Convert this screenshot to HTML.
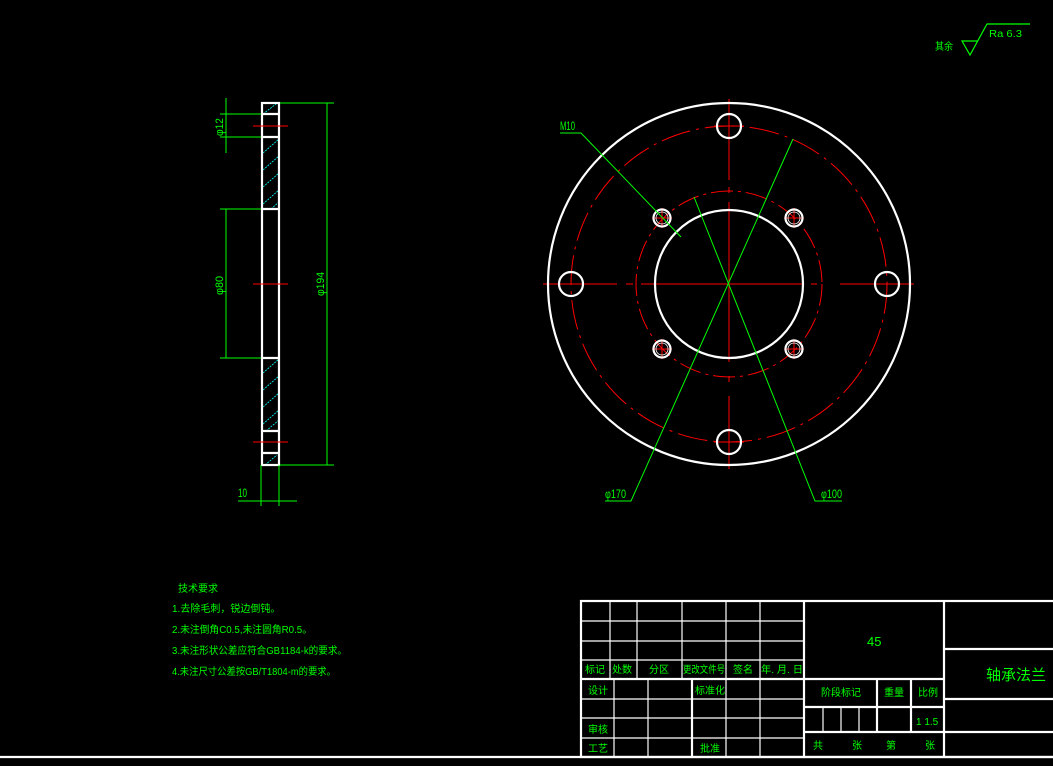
<!DOCTYPE html>
<html><head><meta charset="utf-8"><style>
html,body{margin:0;padding:0;background:#000;width:1053px;height:766px;overflow:hidden}
svg{display:block}
text{font-family:"Liberation Sans","Noto Sans CJK SC",sans-serif;fill:#00ff00}
</style></head><body>
<svg width="1053" height="766" viewBox="0 0 1053 766" xmlns="http://www.w3.org/2000/svg">
<!-- surface finish -->
<text x="935" y="50" font-size="10" textLength="18" lengthAdjust="spacingAndGlyphs">其余</text>
<polyline points="978,41 962,41 970,55 987,24 1030,24" fill="none" stroke="#00ff00" stroke-width="1.2"/>
<text x="989" y="37" font-size="10" textLength="33" lengthAdjust="spacingAndGlyphs">Ra 6.3</text>

<!-- side view -->
<g fill="none">
<g stroke="#00ffff" stroke-width="0.8" stroke-dasharray="2,1">
<line x1="263" y1="114" x2="276" y2="104"/>
<line x1="263" y1="153" x2="279" y2="139"/><line x1="263" y1="170" x2="279" y2="156"/><line x1="263" y1="187" x2="279" y2="173"/><line x1="263" y1="204" x2="279" y2="190"/><line x1="271" y1="209" x2="279" y2="202"/>
<line x1="263" y1="373" x2="279" y2="359"/><line x1="263" y1="390" x2="279" y2="376"/><line x1="263" y1="407" x2="279" y2="393"/><line x1="263" y1="424" x2="279" y2="410"/><line x1="266" y1="431" x2="279" y2="420"/>
<line x1="265" y1="465" x2="277" y2="455"/>
</g>
<g stroke="#fff" stroke-width="2.2">
<rect x="262" y="103" width="17" height="362"/>
<line x1="262" y1="114" x2="279" y2="114"/><line x1="262" y1="137" x2="279" y2="137"/>
<line x1="262" y1="209" x2="279" y2="209"/><line x1="262" y1="358" x2="279" y2="358"/>
<line x1="262" y1="431" x2="279" y2="431"/><line x1="262" y1="453" x2="279" y2="453"/>
</g>
<g stroke="#ff0000" stroke-width="1">
<line x1="253" y1="126" x2="288" y2="126"/><line x1="253" y1="284" x2="288" y2="284"/><line x1="253" y1="442" x2="288" y2="442"/>
</g>
<g stroke="#00ff00" stroke-width="1">
<line x1="226" y1="98" x2="226" y2="153"/>
<line x1="220" y1="114" x2="261" y2="114"/><line x1="220" y1="137" x2="261" y2="137"/>
<line x1="226" y1="209" x2="226" y2="358"/>
<line x1="220" y1="209" x2="261" y2="209"/><line x1="220" y1="358" x2="261" y2="358"/>
<line x1="327" y1="103" x2="327" y2="465"/>
<line x1="280" y1="103" x2="334" y2="103"/><line x1="280" y1="465" x2="334" y2="465"/>
<line x1="261" y1="465" x2="261" y2="506"/><line x1="279" y1="465" x2="279" y2="506"/>
<line x1="238" y1="501" x2="297" y2="501"/>
</g>
</g>
<text transform="translate(223,136) rotate(-90)" font-size="11" textLength="18" lengthAdjust="spacingAndGlyphs">φ12</text>
<text transform="translate(223,295) rotate(-90)" font-size="11" textLength="19" lengthAdjust="spacingAndGlyphs">φ80</text>
<text transform="translate(324,296) rotate(-90)" font-size="11" textLength="24" lengthAdjust="spacingAndGlyphs">φ194</text>
<text x="238" y="497" font-size="12" textLength="9" lengthAdjust="spacingAndGlyphs">10</text>

<!-- front view -->
<g fill="none">
<g stroke="#ff0000" stroke-width="1">
<circle cx="729" cy="284" r="158" stroke-dasharray="30,6,3,6"/>
<circle cx="729" cy="284" r="93" stroke-dasharray="22,5,3,5"/>
<line x1="543" y1="284" x2="617" y2="284"/><line x1="626" y1="284" x2="633" y2="284"/><line x1="641" y1="284" x2="803" y2="284"/><line x1="811" y1="284" x2="817" y2="284"/><line x1="840" y1="284" x2="914" y2="284"/>
<line x1="729" y1="99" x2="729" y2="180"/><line x1="729" y1="187" x2="729" y2="193"/><line x1="729" y1="202" x2="729" y2="362"/><line x1="729" y1="376" x2="729" y2="382"/><line x1="729" y1="396" x2="729" y2="469"/>
<line x1="652" y1="218" x2="672" y2="218"/><line x1="662" y1="208" x2="662" y2="228"/>
<line x1="784" y1="218" x2="804" y2="218"/><line x1="794" y1="208" x2="794" y2="228"/>
<line x1="652" y1="349" x2="672" y2="349"/><line x1="662" y1="339" x2="662" y2="359"/>
<line x1="784" y1="349" x2="804" y2="349"/><line x1="794" y1="339" x2="794" y2="359"/>
<line x1="714" y1="126" x2="744" y2="126"/><line x1="714" y1="442" x2="744" y2="442"/>
<line x1="559" y1="284" x2="583" y2="284"/><line x1="875" y1="284" x2="899" y2="284"/>
</g>
<g stroke="#fff" stroke-width="2.2">
<circle cx="729" cy="284" r="181"/>
<circle cx="729" cy="284" r="74"/>
<circle cx="729" cy="126" r="12"/><circle cx="729" cy="442" r="12"/>
<circle cx="571" cy="284" r="12"/><circle cx="887" cy="284" r="12"/>
<circle cx="662" cy="218" r="8.5"/><circle cx="794" cy="218" r="8.5"/>
<circle cx="662" cy="349" r="8.5"/><circle cx="794" cy="349" r="8.5"/>
</g>
<g stroke="#fff" stroke-width="0.8">
<circle cx="662" cy="218" r="6"/><circle cx="794" cy="218" r="6"/>
<circle cx="662" cy="349" r="6"/><circle cx="794" cy="349" r="6"/>
</g>
<g stroke="#00ff00" stroke-width="1">
<polyline points="560,133 581,133 681,237"/>
<polyline points="605,501 631,501 793,139"/>
<polyline points="842,501 815,501 694,197"/>
</g>
</g>
<text x="560" y="130" font-size="12" textLength="15" lengthAdjust="spacingAndGlyphs">M10</text>
<text x="605" y="498" font-size="12" textLength="21" lengthAdjust="spacingAndGlyphs">φ170</text>
<text x="821" y="498" font-size="12" textLength="21" lengthAdjust="spacingAndGlyphs">φ100</text>

<!-- technical requirements -->
<g font-size="10">
<text x="178" y="592">技术要求</text>
<text x="172" y="612">1.去除毛刺，锐边倒钝。</text>
<text x="172" y="633" textLength="140" lengthAdjust="spacingAndGlyphs">2.未注倒角C0.5,未注圆角R0.5。</text>
<text x="172" y="654" textLength="175" lengthAdjust="spacingAndGlyphs">3.未注形状公差应符合GB1184-k的要求。</text>
<text x="172" y="675" textLength="164" lengthAdjust="spacingAndGlyphs">4.未注尺寸公差按GB/T1804-m的要求。</text>
</g>

<!-- bottom line -->
<line x1="0" y1="757" x2="1053" y2="757" stroke="#fff" stroke-width="2.2"/>

<!-- title block -->
<g fill="none" stroke="#fff" stroke-width="1.2">
<line x1="610" y1="601" x2="610" y2="679"/><line x1="637" y1="601" x2="637" y2="679"/>
<line x1="682" y1="601" x2="682" y2="679"/><line x1="726" y1="601" x2="726" y2="757"/>
<line x1="760" y1="601" x2="760" y2="757"/>
<line x1="581" y1="621" x2="804" y2="621"/><line x1="581" y1="641" x2="804" y2="641"/><line x1="581" y1="660" x2="804" y2="660"/>
<line x1="614" y1="679" x2="614" y2="757"/><line x1="648" y1="679" x2="648" y2="757"/>
<line x1="581" y1="699" x2="804" y2="699"/><line x1="581" y1="718" x2="804" y2="718"/><line x1="581" y1="738" x2="804" y2="738"/>
<line x1="823" y1="707" x2="823" y2="732"/><line x1="841" y1="707" x2="841" y2="732"/><line x1="859" y1="707" x2="859" y2="732"/>
</g>
<g fill="none" stroke="#fff" stroke-width="2.2">
<rect x="581" y="601" width="480" height="156"/>
<line x1="804" y1="601" x2="804" y2="757"/><line x1="944" y1="601" x2="944" y2="757"/>
<line x1="581" y1="679" x2="944" y2="679"/>
<line x1="692" y1="679" x2="692" y2="757"/>
<line x1="804" y1="707" x2="944" y2="707"/><line x1="804" y1="732" x2="944" y2="732"/>
<line x1="877" y1="679" x2="877" y2="732"/><line x1="911" y1="679" x2="911" y2="732"/>
<line x1="944" y1="649" x2="1053" y2="649"/><line x1="944" y1="699" x2="1053" y2="699"/><line x1="944" y1="732" x2="1053" y2="732"/>
</g>
<g font-size="10">
<text x="585" y="673">标记</text><text x="612" y="673">处数</text><text x="649" y="673">分区</text>
<text x="683" y="673" textLength="42" lengthAdjust="spacingAndGlyphs">更改文件号</text><text x="733" y="673">签名</text>
<text x="761" y="673" textLength="42" lengthAdjust="spacingAndGlyphs">年. 月. 日</text>
<text x="588" y="694">设计</text><text x="695" y="694">标准化</text>
<text x="588" y="733">审核</text><text x="588" y="752">工艺</text><text x="700" y="752">批准</text>
<text x="821" y="696">阶段标记</text><text x="884" y="696">重量</text><text x="918" y="696">比例</text>
<text x="916" y="725">1 1.5</text>
<text x="813" y="749">共</text><text x="852" y="749">张</text><text x="886" y="749">第</text><text x="925" y="749">张</text>
</g>
<text x="867" y="646" font-size="13">45</text>
<text x="986" y="680" font-size="15">轴承法兰</text>
</svg>
</body></html>
